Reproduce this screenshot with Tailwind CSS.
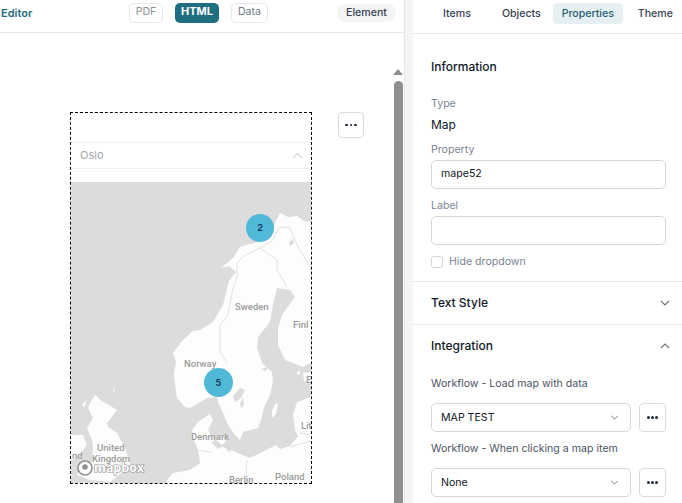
<!DOCTYPE html>
<html lang="en">
<head>
<meta charset="UTF-8">
<title>Editor</title>
<script src="https://cdn.jsdelivr.net/npm/@tailwindcss/browser@4"></script>
</head>
<body class="bg-white font-['Inter',sans-serif] overflow-hidden">
<div class="flex w-[682px] h-[503px] overflow-hidden">
  <!-- editor side -->
  <div class="w-[405px] shrink-0 flex flex-col border-r border-[#e5e7eb]">
    <div class="relative h-[33px] shrink-0 border-b border-[#e5e7eb] flex items-center">
      <span class="ml-[1px] mt-[-6px] w-[128px] text-[11px] font-semibold text-[#1f6f82]">Editor</span>
      <div class="flex items-start gap-3 mt-[-7px]">
        <span class="h-[20px] w-[34px] rounded-[5px] border border-[#e5e7eb] text-[10.600px] leading-[16px] text-center text-[#8a8f98]">PDF</span>
        <span class="h-[20px] w-[44px] rounded-[5px] bg-[#1f6f82] text-[11px] leading-[17px] font-bold text-center text-white">HTML</span>
        <span class="h-[20px] w-[37px] rounded-[5px] border border-[#e5e7eb] text-[10.600px] leading-[16px] text-center text-[#737a86]">Data</span>
      </div>
      <span class="ml-auto mr-[8px] mt-[-6px] h-[18px] w-[59px] rounded-full bg-[#f3f4f6] text-[10.600px] leading-[18px] text-center font-medium text-[#374151]">Element</span>
    </div>
    <div class="flex flex-1 min-h-0">
      <div class="w-[392px] pl-[70px] pt-[79px] flex items-start">
        <div class="w-[242px] h-[372px] shrink-0 border border-dashed border-black flex flex-col">
          <div class="mt-[29px] h-[27px] shrink-0 border-y border-[#eeeff1] flex items-center justify-between pl-[9px] pr-[8px]">
            <span class="text-[11px] text-[#a3a7ad]">Oslo</span>
            <svg width="11" height="7" viewBox="0 0 11 7" fill="none" stroke="#d4d6da" stroke-width="1.2"><path d="M1 6l4.500-4.500L10 6"/></svg>
          </div>
          <div class="relative mt-[13px] flex-1 overflow-hidden bg-[#dcdcdc]">
            <svg class="absolute inset-0" width="240" height="301" viewBox="71 182 240 301">
              <!-- Norway, Sweden, Finland -->
              <path fill="#fdfdfd" d="M311 222L304 221L297 216L288 217L280 213L277 219L274 226L268 237L258 242L246 245L240 247L233 258L221 268L229 266L236 272L229 281L223 305L213 322L200 330L193 331L183 340L173 353L176 362L174 373L175 385L177 398L185 407L190 408L207 398L217 397L218 402L223 413L228 425L235 435L240 440L243 432L258 428L262 415L265 405L270 395L273 382L272 372L262 363L257 348L258 337L270 322L273 305L277 288L290 290L295 297L282 315L278 328L278 345L285 360L303 367L311 363Z"/>
              <!-- east and south of the Baltic -->
              <path fill="#fdfdfd" d="M311 397L297 402L293 415L295 430L298 436L290 446L280 449L276 445L262 452L250 458L240 454L233 451L226 448L216 445L212 437L208 430L213 420L210 414L198 422L192 430L194 440L198 450L200 463L190 470L173 473L167 480L167 483L311 483Z"/>
              <path fill="#dcdcdc" d="M228 452L236 448L233 444L226 447ZM211 442L220 440L226 445L218 449Z"/>
              <path fill="#fdfdfd" d="M216 440L222 436L226 441L222 445ZM303 373L311 372L311 383L304 381Z"/>
              <!-- Great Britain and Ireland -->
              <path fill="#fdfdfd" d="M95 395L103 402L109 405L117 410L107 423L108 427L117 433L125 448L130 463L128 470L120 474L110 482L90 480L77 475L79 470L92 462L93 445L92 440L87 428L93 418L88 408L90 403ZM71 435L83 435L87 445L82 452L73 460L71 460Z"/>
              <path fill="#fdfdfd" d="M113 390L115 386L114 393ZM82 405L87 399L84 408Z"/>
              <!-- lakes and islands -->
              <g fill="#dcdcdc"><path d="M233 396L240 388L245 390L241 398L235 402ZM240 404L243 397L244 405L241 408ZM289 243L293 238L294 243L290 246ZM261 369L268 367L266 371Z"/></g>
              <path fill="#fdfdfd" d="M272 410L276 403L278 405L276 414L272 418ZM296 373L300 370L300 375ZM260 415L262 415L260 425Z"/>
              <!-- borders -->
              <path fill="none" stroke="#d4d4d4" stroke-width=".7" d="M311 268L298 247L290 228L280 227L272 241L260 248L245 255L237 263L237 277L233 288L228 315L220 325L220 352L227 363M260 248L277 260L277 270L287 287M300 433L311 435M290 447L311 441M247 460L246 470L247 483M198 450L212 452"/>
              <g font-family="Roboto, sans-serif" font-size="9.500" font-weight="500" fill="#9b9b9b" stroke="#fff" stroke-width=".4" paint-order="stroke">
                <text x="235" y="310">Sweden</text>
                <text x="293" y="328">Finl</text>
                <text x="184" y="367">Norway</text>
                <text x="306" y="383">E</text>
                <text x="191" y="440">Denmark</text>
                <text x="97" y="451">United</text>
                <text x="92" y="462">Kingdom</text>
                <text x="72" y="459">nd</text>
                <text x="301" y="429">Lit</text>
                <text x="275" y="480">Poland</text>
                <text x="229" y="483">Berlin</text>
              </g>
              <circle cx="85" cy="468" r="7" fill="#fff" stroke="#8f8f8f" stroke-width="1.600"/>
              <circle cx="85" cy="467" r="2.800" fill="#8f8f8f"/>
              <text x="94" y="472" font-family="Roboto, sans-serif" font-size="13.500" font-weight="700" letter-spacing=".3" fill="#fff" stroke="#8f8f8f" stroke-width="1.200" paint-order="stroke">mapbox</text>
            </svg>
            <span class="absolute left-[175px] top-[32px] w-[28px] h-[28px] rounded-full bg-[#51b9d8] text-[9px] leading-[28px] font-bold text-center text-[#1c3a55]">2</span>
            <span class="absolute left-[133px] top-[186px] w-[29px] h-[29px] rounded-full bg-[#51b9d8] text-[9px] leading-[29px] font-bold text-center text-[#1c3a55]">5</span>
          </div>
        </div>
        <button class="ml-[26px] w-[26px] h-[26px] shrink-0 rounded-[4px] border border-[#d9dbe1] flex items-center justify-center gap-[2px]">
          <i class="w-[2.500px] h-[2.500px] rounded-full bg-[#1f2937]"></i><i class="w-[2.500px] h-[2.500px] rounded-full bg-[#1f2937]"></i><i class="w-[2.500px] h-[2.500px] rounded-full bg-[#1f2937]"></i>
        </button>
      </div>
      <!-- scrollbar -->
      <div class="w-[12px] mt-[31px] flex flex-col items-center">
        <div class="mt-[5px] w-0 h-0 border-x-[5px] border-x-transparent border-b-[6px] border-b-[#8f8f8f]"></div>
        <div class="mt-[6px] w-[9px] flex-1 rounded-t-full bg-[#8f8f8f]"></div>
      </div>
    </div>
  </div>
  <div class="w-[8px] shrink-0 bg-[#f3f4f6]"></div>
  <!-- properties side -->
  <div class="w-[269px] shrink-0 flex flex-col text-[10.600px]">
    <div class="h-[34px] shrink-0 border-b border-[#e5e7eb] flex items-start pt-[3px] text-[#374151] font-medium whitespace-nowrap">
      <span class="ml-[30px] leading-[21px]">Items</span>
      <span class="ml-[31px] leading-[21px]">Objects</span>
      <span class="ml-[12px] w-[70px] h-[21px] rounded-[5px] bg-[#e6f0f3] leading-[21px] text-center text-[#1f5f73]">Properties</span>
      <span class="ml-[15px] leading-[21px]">Theme</span>
    </div>
    <div class="pl-[18px] pr-[16px] border-b border-[#e5e7eb] h-[248px] shrink-0">
      <h3 class="mt-[25px] text-[12px] leading-[16px] font-medium text-[#111827]">Information</h3>
      <div class="mt-[22px] leading-[14px] text-[#7b8494]">Type</div>
      <div class="mt-[6px] text-[12px] leading-[16px] text-[#111827]">Map</div>
      <label class="block mt-[10px] leading-[14px] text-[#7b8494]">Property</label>
      <div class="mt-[3px] h-[29px] rounded-[5px] border border-[#d4d6dd] pl-[9px] leading-[26px] text-[#111827]">mape52</div>
      <label class="block mt-[10px] leading-[14px] text-[#7b8494]">Label</label>
      <div class="mt-[3px] h-[29px] rounded-[5px] border border-[#d4d6dd]"></div>
      <div class="mt-[9px] flex items-center gap-[6px]">
        <span class="w-[12px] h-[12px] rounded-[3px] border border-[#d4d6dd]"></span>
        <span class="text-[#7b8494]">Hide dropdown</span>
      </div>
    </div>
    <div class="h-[43px] shrink-0 border-b border-[#e5e7eb] pl-[18px] pr-[12px] flex items-center justify-between">
      <span class="text-[12px] font-medium text-[#111827]">Text Style</span>
      <svg width="10" height="6" viewBox="0 0 10 6" fill="none" stroke="#6b7280" stroke-width="1.100"><path d="M1 1l4 4 4-4"/></svg>
    </div>
    <div class="pl-[18px] pr-[16px]">
      <div class="h-[42px] flex items-center justify-between">
        <span class="text-[12px] font-medium text-[#111827]">Integration</span>
        <svg class="mr-[-4px]" width="10" height="6" viewBox="0 0 10 6" fill="none" stroke="#6b7280" stroke-width="1.100"><path d="M1 5l4-4 4 4"/></svg>
      </div>
      <div class="mt-[10px] leading-[14px] text-[#4b5563]">Workflow - Load map with data</div>
      <div class="mt-[12px] flex gap-[8px]">
        <div class="w-[200px] h-[29px] rounded-[5px] border border-[#d4d6dd] pl-[9px] pr-[11px] flex items-center justify-between text-[#111827]">MAP TEST
          <svg width="9" height="5" viewBox="0 0 10 6" fill="none" stroke="#6b7280" stroke-width="1.100"><path d="M1 1l4 4 4-4"/></svg>
        </div>
        <button class="w-[27px] h-[29px] rounded-[4px] border border-[#d9dbe1] flex items-center justify-center gap-[1.500px]">
          <i class="w-[2.500px] h-[2.500px] rounded-full bg-[#1f2937]"></i><i class="w-[2.500px] h-[2.500px] rounded-full bg-[#1f2937]"></i><i class="w-[2.500px] h-[2.500px] rounded-full bg-[#1f2937]"></i>
        </button>
      </div>
      <div class="mt-[10px] leading-[14px] text-[#4b5563]">Workflow - When clicking a map item</div>
      <div class="mt-[12px] flex gap-[8px]">
        <div class="w-[200px] h-[29px] rounded-[5px] border border-[#d4d6dd] pl-[9px] pr-[11px] flex items-center justify-between text-[#111827]">None
          <svg width="9" height="5" viewBox="0 0 10 6" fill="none" stroke="#6b7280" stroke-width="1.100"><path d="M1 1l4 4 4-4"/></svg>
        </div>
        <button class="w-[27px] h-[29px] rounded-[4px] border border-[#d9dbe1] flex items-center justify-center gap-[1.500px]">
          <i class="w-[2.500px] h-[2.500px] rounded-full bg-[#1f2937]"></i><i class="w-[2.500px] h-[2.500px] rounded-full bg-[#1f2937]"></i><i class="w-[2.500px] h-[2.500px] rounded-full bg-[#1f2937]"></i>
        </button>
      </div>
    </div>
  </div>
</div>
</body>
</html>
